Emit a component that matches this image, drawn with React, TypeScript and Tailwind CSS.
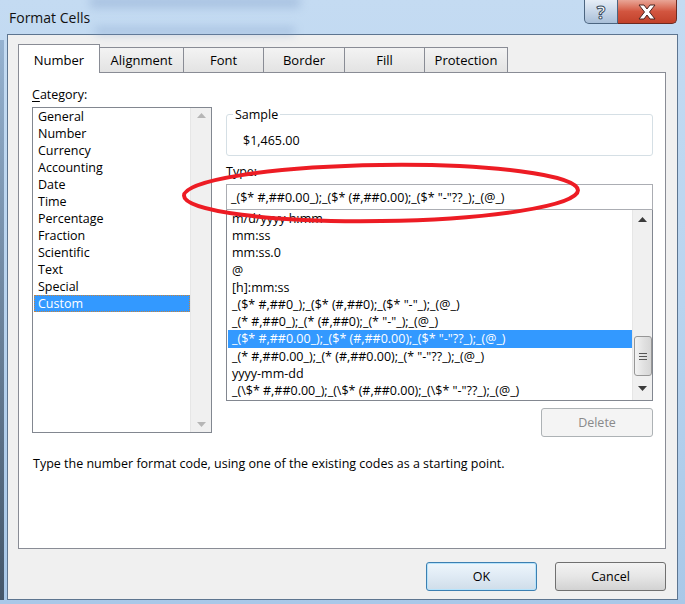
import React from 'react';

const categories = [
  'General',
  'Number',
  'Currency',
  'Accounting',
  'Date',
  'Time',
  'Percentage',
  'Fraction',
  'Scientific',
  'Text',
  'Special',
  'Custom',
];

const formats = [
  'm/d/yyyy h:mm',
  'mm:ss',
  'mm:ss.0',
  '@',
  '[h]:mm:ss',
  '_($* #,##0_);_($* (#,##0);_($* "-"_);_(@_)',
  '_(* #,##0_);_(* (#,##0);_(* "-"_);_(@_)',
  '_($* #,##0.00_);_($* (#,##0.00);_($* "-"??_);_(@_)',
  '_(* #,##0.00_);_(* (#,##0.00);_(* "-"??_);_(@_)',
  'yyyy-mm-dd',
  '_(\\$* #,##0.00_);_(\\$* (#,##0.00);_(\\$* "-"??_);_(@_)',
];

const tabs = [
  { label: 'Number', w: 'w-[82px]' },
  { label: 'Alignment', w: 'w-[85px]' },
  { label: 'Font', w: 'w-[81px]' },
  { label: 'Border', w: 'w-[82px]' },
  { label: 'Fill', w: 'w-[81px]' },
  { label: 'Protection', w: 'w-[84px]' },
];

function Arrow({ up, color }: { up?: boolean; color: string }) {
  return (
    <svg width="9" height="5" viewBox="0 0 9 5">
      <path d={up ? 'M0 5 L4.5 0 L9 5 Z' : 'M0 0 L4.5 5 L9 0 Z'} fill={color} />
    </svg>
  );
}

export default function App() {
  return (
    <div className="relative w-[685px] h-[604px] overflow-hidden bg-gradient-to-b from-[#c4dbf2] via-[#b9d4ef] to-[#a9c8e8] font-['Segoe_UI','Open_Sans',sans-serif] text-black">
      {/* blurred sheet behind the glass */}
      <div className="absolute left-[90px] top-[-4px] w-[210px] h-[12px] bg-[#7896c2] opacity-35 blur-[5px]" />
      <div className="absolute left-[95px] top-[27px] w-[200px] h-[8px] bg-[#7896c2] opacity-35 blur-[5px]" />
      <div className="absolute left-0 top-[40px] w-[4px] h-[560px] bg-gradient-to-b from-[#8aa8c8] to-[#2b3a4a] opacity-80" />

      {/* title bar */}
      <div className="flex h-[34px]">
        <div className="pl-[9px] pt-[9px] text-[14px] leading-[18px] text-[#111]">Format Cells</div>
        <div className="ml-auto mr-[8px] flex">
          <div className="w-[34px] h-[24px] rounded-bl-[5px] border border-t-0 border-[#4c6580] bg-gradient-to-b from-[#e6edf6] via-[#c7d6e8] to-[#a9bfd8] flex items-center justify-center text-[18px] font-bold leading-none text-white [-webkit-text-stroke:1px_#3a4c60]">
            ?
          </div>
          <div className="w-[59px] h-[24px] rounded-br-[5px] border border-t-0 border-l-0 border-[#6b2a22] bg-gradient-to-b from-[#e8a596] via-[#d2553f] to-[#c2412a] flex items-center justify-center">
            <svg width="20" height="16" viewBox="0 0 20 16">
              <path
                d="M2 1 H7 L10 5 L13 1 H18 L12.5 8 L18 15 H13 L10 11 L7 15 H2 L7.5 8 Z"
                fill="#fff"
                stroke="#4a2420"
                strokeWidth="1"
                strokeLinejoin="round"
              />
            </svg>
          </div>
        </div>
      </div>

      {/* client area */}
      <div className="ml-[7px] w-[671px] h-[566px] border border-[#5d7590] bg-[#f0f0f0] text-[12.5px] leading-[17px]">
        {/* tabs */}
        <div className="ml-[10px] mt-[9px] flex items-end h-[28px]">
          {tabs.map((t, i) =>
            i === 0 ? (
              <div
                key={t.label}
                className={`${t.w} relative z-10 -mb-px h-[29px] border border-b-0 border-[#898c95] bg-white flex items-center justify-center pt-[2px] text-[13px]`}
              >
                {t.label}
              </div>
            ) : (
              <div
                key={t.label}
                className={`${t.w} -ml-px h-[25px] border border-b-0 border-[#898c95] bg-gradient-to-b from-[#f3f3f3] to-[#e3e3e3] flex items-center justify-center pt-px text-[13px]`}
              >
                {t.label}
              </div>
            )
          )}
        </div>

        {/* panel */}
        <div className="ml-[10px] w-[648px] h-[477px] border border-[#898c95] bg-white">
          <div className="flex">
            {/* left column */}
            <div className="ml-[13px] w-[180px]">
              <div className="mt-[13px] h-[17px]">
                <span className="underline underline-offset-2">C</span>ategory:
              </div>
              <div className="mt-[4px] h-[326px] border border-[#828790] flex">
                <div className="flex-1 pl-px">
                  {categories.map((c) =>
                    c === 'Custom' ? (
                      <div
                        key={c}
                        className="h-[17px] pl-[3px] bg-[#3399ff] text-white border border-dotted border-[#c8843c] leading-[15px]"
                      >
                        {c}
                      </div>
                    ) : (
                      <div key={c} className="h-[17px] pl-[4px]">
                        {c}
                      </div>
                    )
                  )}
                </div>
                <div className="w-[21px] bg-[#f0f0f0] border-l border-[#e6e6e6] flex flex-col items-center justify-between py-[5px]">
                  <Arrow up color="#b6b6b6" />
                  <Arrow color="#b6b6b6" />
                </div>
              </div>
            </div>

            {/* right column */}
            <div className="ml-[14px] w-[427px] flex flex-col">
              <div className="relative mt-[41px] h-[42px] rounded-[3px] border border-[#d5dfe5]">
                <span className="absolute left-[6px] top-[-9px] bg-white px-[2px]">Sample</span>
                <div className="pl-[16px] pt-[17px]">$1,465.00</div>
              </div>
              <div className="mt-[7px] h-[17px]">Type:</div>
              <div className="mt-[4px] h-[26px] border border-[#abadb3] pl-[4px] flex items-center">
                {'_($* #,##0.00_);_($* (#,##0.00);_($* "-"??_);_(@_)'}
              </div>
              <div className="h-[191px] border border-t-0 border-[#828790] flex overflow-hidden">
                <div className="flex-1 pl-px overflow-hidden">
                  {formats.map((f, i) =>
                    i === 7 ? (
                      <div key={f} className="h-[17.2px] pl-[4px] bg-[#3399ff] text-white whitespace-pre">
                        {f}
                      </div>
                    ) : (
                      <div key={f} className="h-[17.2px] pl-[4px] whitespace-pre">
                        {f}
                      </div>
                    )
                  )}
                </div>
                <div className="w-[20px] bg-[#f0f0f0] border-l border-[#e6e6e6] flex flex-col items-center py-[7px]">
                  <Arrow up color="#3b3b3b" />
                  <div className="mt-[114px] w-[18px] h-[40px] rounded-[3px] border border-[#979797] bg-gradient-to-r from-[#f3f3f3] via-[#e2e2e2] to-[#d6d6d6] flex flex-col items-center justify-center gap-[2px]">
                    <div className="w-[8px] h-px bg-[#555]" />
                    <div className="w-[8px] h-px bg-[#555]" />
                    <div className="w-[8px] h-px bg-[#555]" />
                  </div>
                  <div className="mt-auto mb-[2px]">
                    <Arrow color="#3b3b3b" />
                  </div>
                </div>
              </div>
              <div className="mt-[7px] self-end w-[112px] h-[29px] rounded-[3px] border border-[#adb2b5] bg-[#f4f4f4] text-[#8a8a8a] flex items-center justify-center">
                Delete
              </div>
            </div>
          </div>
          <div className="ml-[14px] mt-[18px]">
            Type the number format code, using one of the existing codes as a starting point.
          </div>
        </div>

        {/* buttons */}
        <div className="ml-[10px] w-[648px] mt-[13px] flex justify-end gap-[18px]">
          <div className="w-[111px] h-[29px] rounded-[3px] border border-[#3c7fb1] bg-gradient-to-b from-[#eef6fc] via-[#dfeaf4] to-[#cfdde9] shadow-[inset_0_0_0_1px_#b6e3fb] flex items-center justify-center">
            OK
          </div>
          <div className="w-[111px] h-[29px] rounded-[3px] border border-[#707070] bg-gradient-to-b from-[#f3f3f3] via-[#e6e6e6] to-[#d2d2d2] flex items-center justify-center">
            Cancel
          </div>
        </div>
      </div>

      {/* annotation */}
      <svg className="absolute left-0 top-0 pointer-events-none" width="685" height="604" viewBox="0 0 685 604">
        <ellipse cx="381" cy="193" rx="197" ry="28" fill="none" stroke="#ed1c24" strokeWidth="4" transform="rotate(-0.8 381 193)" />
      </svg>
    </div>
  );
}
